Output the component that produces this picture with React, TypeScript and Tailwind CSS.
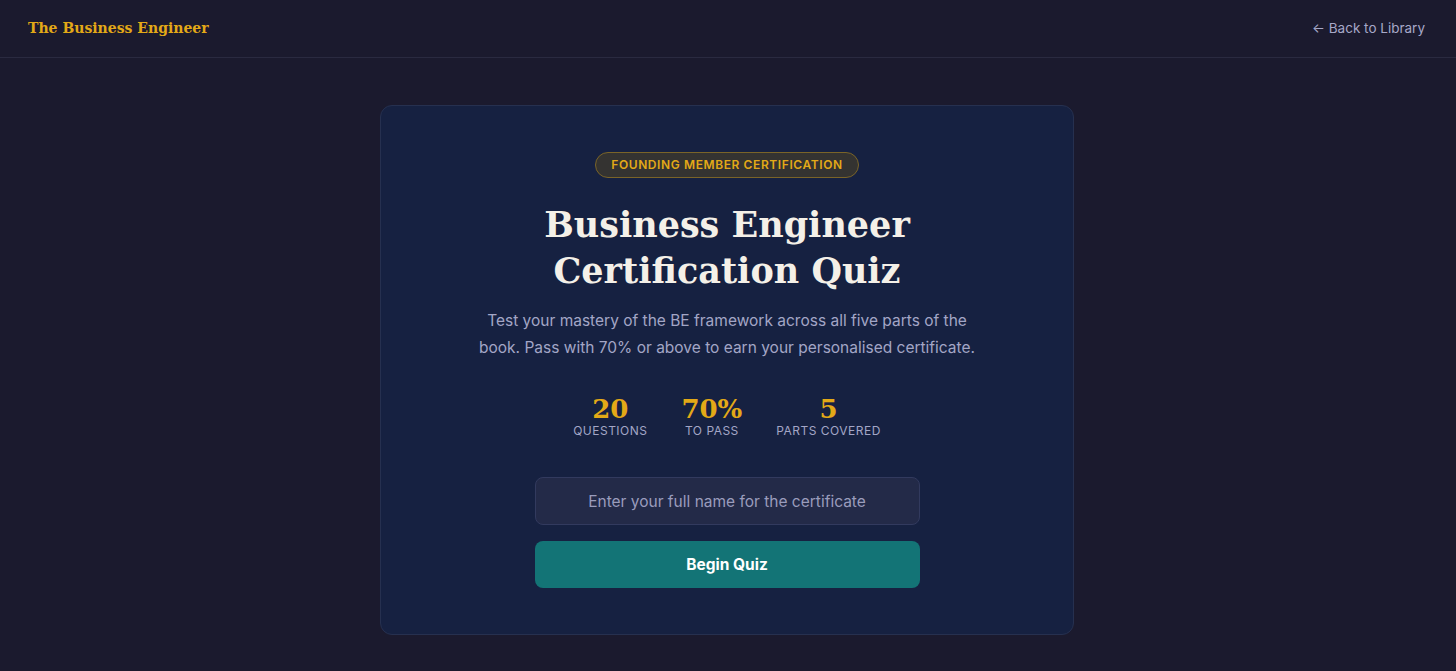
import React, { useState } from 'react';

const serif = "font-['Georgia','DejaVu_Serif',serif]";

interface STAT {
  value: string;
  label: string;
}

const stats: STAT[] = [
  { value: '20', label: 'Questions' },
  { value: '70%', label: 'To Pass' },
  { value: '5', label: 'Parts Covered' },
];

const App: React.FC = () => {
  const [name, setName] = useState<string>('');

  return (
    <div className="min-h-screen w-full bg-[#1b1a2e] font-['Inter',sans-serif] text-white">
      <header className="flex h-[58px] items-center justify-between border-b border-[#2a2a40] pr-[31px] pl-7">
        <div className={`${serif} text-[14px] font-bold text-[#e3a917]`}>The Business Engineer</div>
        <a href="#" className="text-[13.5px] text-[#a7a8c8] hover:text-white">
          ← Back to Library
        </a>
      </header>

      <main className="flex justify-center pt-[47px]">
        <div className="mr-[2px] flex w-[694px] flex-col items-center rounded-xl border border-[#26304f] bg-[#162141] px-12 pt-[46px] pb-[46px]">
          <span className="rounded-full border border-[#7a6428] bg-[#343331] px-[15px] py-[3px] text-[12px] font-semibold tracking-[0.05em] text-[#e3a917] uppercase">
            Founding Member Certification
          </span>

          <h1 className={`${serif} mt-[24px] text-center text-[35px] leading-[46px] font-bold text-[#f4f0e8]`}>
            Business Engineer
            <br />
            Certification Quiz
          </h1>

          <p className="mt-[13px] max-w-[500px] text-center text-[15.5px] leading-[27px] text-[#a3a6c6]">
            Test your mastery of the BE framework across all five parts of the book. Pass with 70% or above to earn
            your personalised certificate.
          </p>

          <div className="mt-[34px] flex gap-[34px]">
            {stats.map((s) => (
              <div key={s.label} className="flex flex-col items-center">
                <span className={`${serif} text-[26px] leading-[28px] font-bold text-[#e3a917]`}>{s.value}</span>
                <span className="mt-[1px] text-[12px] leading-[14px] tracking-[0.04em] text-[#a3a6c6] uppercase">
                  {s.label}
                </span>
              </div>
            ))}
          </div>

          <input
            value={name}
            onChange={(e) => setName(e.target.value)}
            placeholder="Enter your full name for the certificate"
            className="mt-[39px] h-[48px] w-[385px] rounded-lg border border-[#323a5e] bg-[#232a48] px-4 text-center text-[15.5px] text-white outline-none placeholder:text-[#9a9cbc]"
          />

          <button className="mt-[16px] h-[47px] w-[385px] rounded-lg bg-[#137476] text-[15.5px] font-bold text-white hover:bg-[#168688]">
            Begin Quiz
          </button>
        </div>
      </main>
    </div>
  );
};

export default App;
